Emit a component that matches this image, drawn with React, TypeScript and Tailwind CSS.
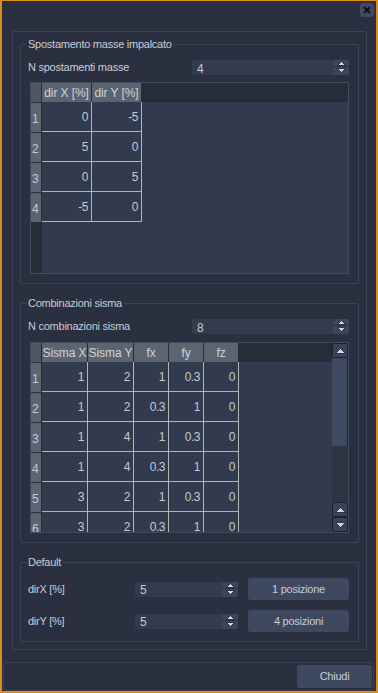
import React from "react";

const FONT = { fontFamily: '"Liberation Sans", Arial, sans-serif' };

function Tri({ up }: { up: boolean }) {
  return (
    <svg width="9" height="5" viewBox="0 0 9 5" className="block">
      {up ? (
        <path d="M0.5 4.5 L4.5 0.5 L8.5 4.5 Z" fill="#d3d7dc" stroke="#1c2029" strokeWidth="0.8" />
      ) : (
        <path d="M0.5 0.5 L4.5 4.5 L8.5 0.5 Z" fill="#d3d7dc" stroke="#1c2029" strokeWidth="0.8" />
      )}
    </svg>
  );
}

function Spin({ value, w }: { value: string; w: string }) {
  return (
    <div className={`${w} h-[15px] flex bg-[#333b4f] rounded-[2px] mr-[2px]`}>
      <div className="flex-1 pl-[5px] flex items-center text-[#c6cad1] text-[12px] leading-none pt-[2px]">{value}</div>
      <div className="w-[16px] flex flex-col bg-[#3c465b] rounded-r-[2px]">
        <div className="h-[7px] flex items-end justify-center border-b border-[#2b3141]">
          <Tri up />
        </div>
        <div className="flex-1 flex items-start justify-center pt-[1px]">
          <Tri up={false} />
        </div>
      </div>
    </div>
  );
}

function SbBtn({ up }: { up: boolean }) {
  return (
    <div className="h-[15px] shrink-0 bg-[#39435a] border border-[#1b2029] rounded-[2px] flex items-center justify-center">
      <svg width="11" height="6" viewBox="0 0 11 6" className="block">
        {up ? (
          <path d="M0.5 5.5 L5.5 0.5 L10.5 5.5 Z" fill="#d3d7dc" stroke="#1c2029" strokeWidth="0.8" />
        ) : (
          <path d="M0.5 0.5 L5.5 5.5 L10.5 0.5 Z" fill="#d3d7dc" stroke="#1c2029" strokeWidth="0.8" />
        )}
      </svg>
    </div>
  );
}

type Col = { label: string; w: string };

function Table({
  cols,
  rows,
  h,
  scroll,
}: {
  cols: Col[];
  rows: string[][];
  h: string;
  scroll?: boolean;
}) {
  return (
    <div className={`mx-[2px] ${h} border border-[#424a5b] bg-[#323a4e] flex overflow-hidden`}>
      <div className="w-[11px] shrink-0 flex flex-col bg-[#262c38]">
        <div className="h-[19px] w-[10px] shrink-0 bg-[#4e5865]" />
        {rows.map((_, i) => (
          <div
            key={i}
            className="h-[30px] shrink-0 w-[10px] bg-[#5b6571] border-t border-[#2c323e] flex items-center pt-[2px] pl-[1px] text-[#c4cad2] text-[12px] tracking-normal overflow-hidden"
          >
            {i + 1}
          </div>
        ))}
      </div>
      <div className="flex-1 min-w-0 flex flex-col">
        <div className="h-[19px] shrink-0 flex bg-[#262c38]">
          {cols.map((c) => (
            <div
              key={c.label}
              className={`${c.w} shrink-0 bg-[#5b6571] border-r border-[#262c38] flex items-center justify-center text-[#cfd3d8] text-[12px] tracking-[-0.1px] whitespace-nowrap overflow-hidden`}
            >
              {c.label}
            </div>
          ))}
        </div>
        {rows.map((r, i) => (
          <div key={i} className="h-[30px] shrink-0 flex">
            {r.map((v, j) => (
              <div
                key={j}
                className={`${cols[j].w} shrink-0 border-r border-b border-[#b2b4b7] flex items-center justify-end pr-[3px] pt-[1px] text-[#c2cad5] text-[12px] tracking-[-0.5px]`}
              >
                {v}
              </div>
            ))}
          </div>
        ))}
      </div>
      {scroll && (
        <div className="w-[16px] shrink-0 flex flex-col">
          <SbBtn up />
          <div className="h-[88px] shrink-0 bg-[#3e4962] border-r border-[#1d222b]" />
          <div className="flex-1 bg-[#2e3444]" />
          <SbBtn up />
          <SbBtn up={false} />
        </div>
      )}
    </div>
  );
}

function Group({ title, children }: { title: string; children: React.ReactNode }) {
  return (
    <fieldset className="border border-[#3c4354] rounded-[2px] px-[7px] pb-[9px]">
      <legend className="-ml-[2px] px-[2px] leading-[14px] text-[11px] text-[#c8ccd4]">{title}</legend>
      <div className="pt-[9px]">{children}</div>
    </fieldset>
  );
}

function Btn({ label, w, h }: { label: string; w: string; h: string }) {
  return (
    <div className={`${w} ${h} bg-[#3e4960] rounded-[3px] flex items-center justify-center text-[11px] text-[#c8ccd3]`}>
      {label}
    </div>
  );
}

export default function App() {
  const t1cols: Col[] = [
    { label: "dir X [%]", w: "w-[50px]" },
    { label: "dir Y [%]", w: "w-[50px]" },
  ];
  const t1rows = [
    ["0", "-5"],
    ["5", "0"],
    ["0", "5"],
    ["-5", "0"],
  ];
  const t2cols: Col[] = [
    { label: "Sisma X", w: "w-[46px]" },
    { label: "Sisma Y", w: "w-[46px]" },
    { label: "fx", w: "w-[35px]" },
    { label: "fy", w: "w-[35px]" },
    { label: "fz", w: "w-[35px]" },
  ];
  const t2rows = [
    ["1", "2", "1", "0.3", "0"],
    ["1", "2", "0.3", "1", "0"],
    ["1", "4", "1", "0.3", "0"],
    ["1", "4", "0.3", "1", "0"],
    ["3", "2", "1", "0.3", "0"],
    ["3", "2", "0.3", "1", "0"],
  ];
  return (
    <div
      style={FONT}
      className="w-[378px] h-[693px] bg-[#2a3040] border-t border-x-2 border-b-2 border-[#de8b1d] flex flex-col tracking-[-0.25px] text-[11px] text-[#c8ccd4] overflow-hidden"
    >
      <div className="flex justify-end pr-[2px] pt-[2px]">
        <div className="w-[14px] h-[14px] bg-[#3e4a63] rounded-[3px] flex items-center justify-center">
          <svg width="8" height="8" viewBox="0 0 8 8">
            <path d="M1 1 L7 7 M7 1 L1 7" stroke="#0d0f13" strokeWidth="1.8" />
          </svg>
        </div>
      </div>
      <div className="mt-[14px] ml-[10px] w-[355px] border border-[#3c4354] rounded-[2px] px-[7px] pt-[5px] pb-[7px] flex flex-col">
        <Group title="Spostamento masse impalcato">
          <div className="h-[15px] flex items-center">
            <div className="flex-1">N spostamenti masse</div>
            <Spin value="4" w="w-[157px]" />
          </div>
          <div className="mt-[7px]">
            <Table cols={t1cols} rows={t1rows} h="h-[192px]" />
          </div>
        </Group>
        <div className="mt-[12px]">
          <Group title="Combinazioni sisma">
            <div className="h-[15px] flex items-center">
              <div className="flex-1">N combinazioni sisma</div>
              <Spin value="8" w="w-[157px]" />
            </div>
            <div className="mt-[8px]">
              <Table cols={t2cols} rows={t2rows} h="h-[191px]" scroll />
            </div>
          </Group>
        </div>
        <div className="mt-[12px]">
          <Group title="Default">
            <div className="h-[22px] flex items-center">
              <div className="flex-1">dirX [%]</div>
              <Spin value="5" w="w-[103px]" />
              <div className="ml-[8px] mr-[2px]">
                <Btn label="1 posizione" w="w-[101px]" h="h-[22px]" />
              </div>
            </div>
            <div className="mt-[10px] h-[22px] flex items-center">
              <div className="flex-1">dirY [%]</div>
              <Spin value="5" w="w-[103px]" />
              <div className="ml-[8px] mr-[2px]">
                <Btn label="4 posizioni" w="w-[101px]" h="h-[22px]" />
              </div>
            </div>
          </Group>
        </div>
      </div>
      <div className="mt-[12px] ml-[1px] w-[371px] h-[29px] border border-[#3c4354] rounded-[3px] flex items-center justify-end pr-[1px]">
        <Btn label="Chiudi" w="w-[75px]" h="h-[23px]" />
      </div>
    </div>
  );
}
